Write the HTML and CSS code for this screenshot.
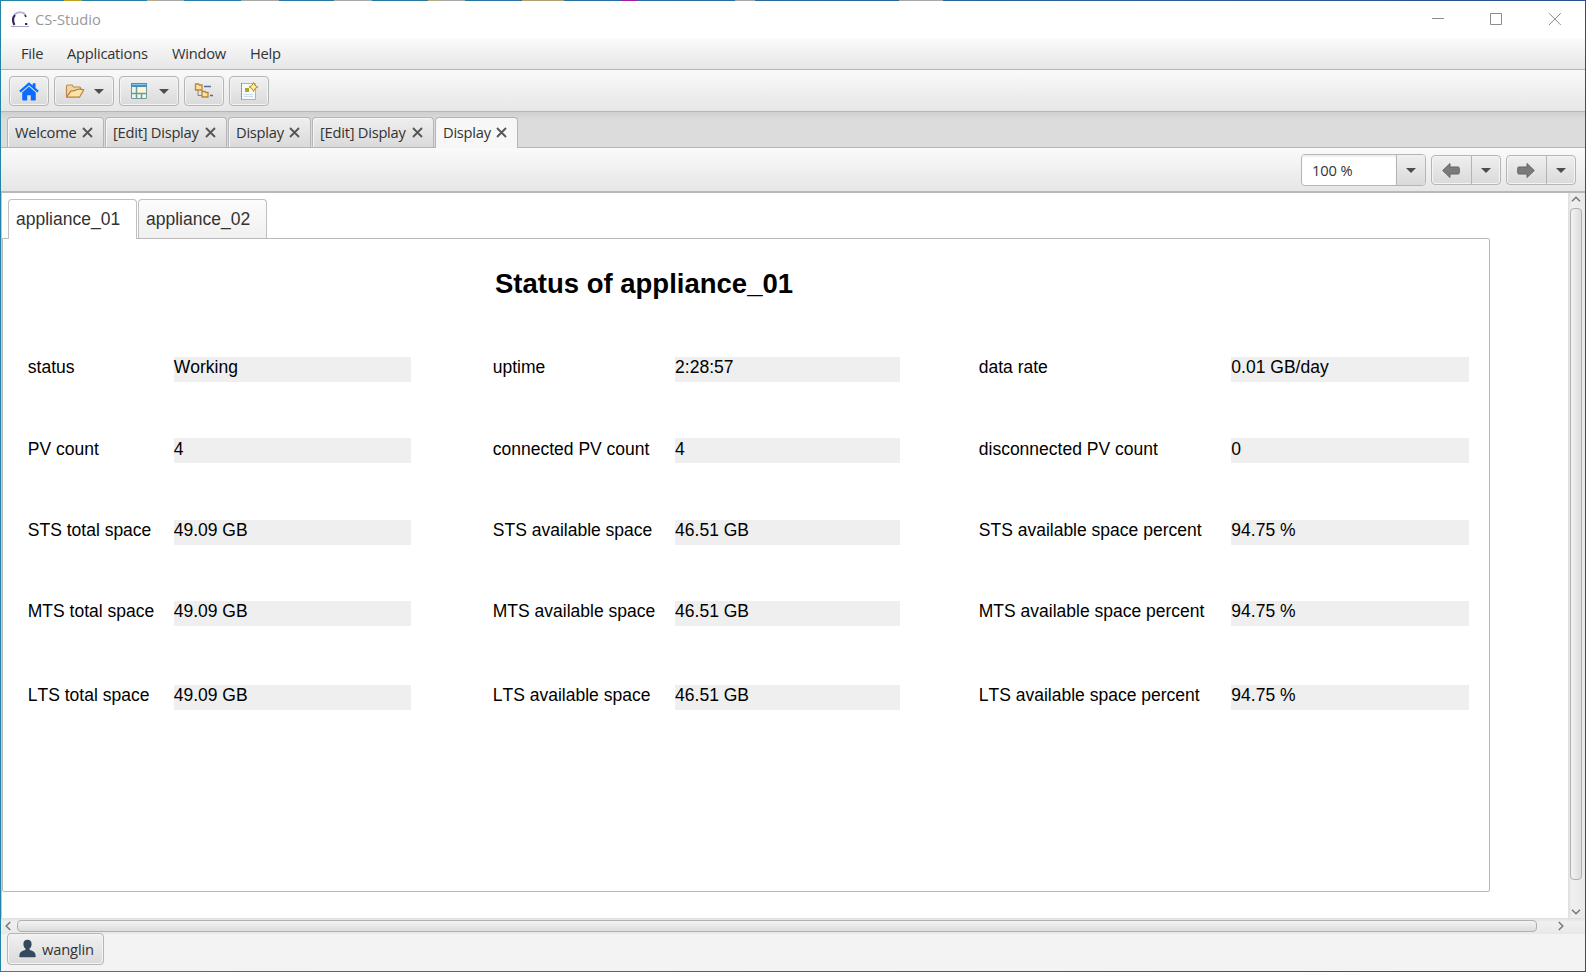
FILE: index.html
```html
<!DOCTYPE html>
<html lang="en">
<head>
<meta charset="utf-8">
<title>CS-Studio</title>
<link rel="stylesheet" href="styles.css">
</head>
<body>
<div class="window">
  <header class="titlebar">
    <svg class="logo" width="18" height="16" viewBox="0 0 18 16"><path d="M3.500 3.500C5.500 1.500 8 1 10 1.300C12.500 1.600 14.200 3 14.700 5.500" fill="none" stroke="#b9b4cf" stroke-width="2"/><path d="M3.300 14C1.500 10 2 6 4 4" fill="none" stroke="#33265c" stroke-width="2.200"/><path d="M14 4l1 2" stroke="#33265c" stroke-width="1.500"/><path d="M14 12h2.300v2H14z" fill="#33265c"/><path d="M0 15.500h18" stroke="#aaa6bd"/></svg>
    <span class="title">CS-Studio</span>
    <svg class="winctl" width="130" height="14" viewBox="0 0 130 14" fill="none" stroke="#8c8c8c"><path d="M0 5.500h12M58.500 .5h11v11h-11zM117 .2l11.800 11.800M128.800 .2L117 12"/></svg>
  </header>
  <nav class="menubar"><span class="m1">File</span><span class="m2">Applications</span><span class="m3">Window</span><span class="m4">Help</span></nav>
  <div class="toolbar">
    <button class="btn"><svg width="20" height="19" viewBox="0 0 20 19" fill="#0a6cff"><path d="M10 .3L.2 8.800l1.400 1.600L10 3.200l8.400 7.200 1.400-1.600-3.300-2.900V1.300h-2.800v2.200z"/><path d="M10 4.600l-6.800 5.800v7.100q0 1 1 1h4v-5.300h3.600v5.300h4q1 0 1-1v-7.100z"/></svg></button>
    <button class="btn wide"><svg width="20" height="16" viewBox="0 0 20 16"><path d="M1.500 13.500V3.500q0-1.500 1.500-1.500h4l1.500 2h6q1 0 1 1v3" fill="#f3d5a3" stroke="#c08a4a" stroke-width="1.200"/><path d="M1.500 14.200L6 7.800q3 .6 6-1.300q3-.8 6.800.3l-4.300 7.400z" fill="#fbe3a5" stroke="#b97f3f" stroke-width="1.200" stroke-linejoin="round"/></svg><i class="arrow"></i></button>
    <button class="btn wide"><svg class="layout" width="16" height="16" viewBox="0 0 16 16"><path d="M.5.500h15v15H.5z" fill="#eef6e8" stroke="#6f97a0"/><path d="M0 0h16v4H0z" fill="#4590c4"/><path d="M1 1h14v1H1z" fill="#8ec4e8"/><path d="M6 5h9v5H6z" fill="#fff7cf"/><path d="M5.500 4v12M1 10.500h14.500M10.500 10.500v5" stroke="#6f97a0" stroke-width="1.500" fill="none"/></svg><i class="arrow"></i></button>
    <button class="btn"><svg width="20" height="16" viewBox="0 0 20 16"><path d="M4 7v5.500h4M10 3.500h6" fill="none" stroke="#7b8594"/><path d="M1.500 1h3l1 1H8v5H1.500zM8 8.500h3l1 1h2v4.500H8z" fill="#ffe39a" stroke="#b9853b" stroke-width="1.300"/><path d="M10 3.500h7M16 12.500h3" stroke="#4d6eac" stroke-width="1.500"/></svg></button>
    <button class="btn"><svg width="18" height="19" viewBox="0 0 18 19"><path d="M1.500 1.500h14v16h-14z" fill="#f4faf9" stroke="#a9b8a8"/><path d="M1.500 1v17" stroke="#6f9184" stroke-dasharray="1.500 1"/><path d="M5 6h4v4H5z" fill="#b5a51e"/><path d="M4 12.500h9M4 14.500h9" stroke="#cbdcec"/><path d="M13.500 .6l1.500 2.900 2.900 1.500-2.900 1.500-1.500 2.900L12 6.500 9.100 5 12 3.500z" fill="#fff3a0" stroke="#b58b24"/></svg></button>
  </div>
  <div class="tabs">
    <div class="tab t1"><span>Welcome</span><svg class="x" viewBox="0 0 11 11"><path d="M1 1l9 9M10 1l-9 9"/></svg></div>
    <div class="tab t2"><span>[Edit] Display</span><svg class="x" viewBox="0 0 11 11"><path d="M1 1l9 9M10 1l-9 9"/></svg></div>
    <div class="tab t3"><span>Display</span><svg class="x" viewBox="0 0 11 11"><path d="M1 1l9 9M10 1l-9 9"/></svg></div>
    <div class="tab t2"><span>[Edit] Display</span><svg class="x" viewBox="0 0 11 11"><path d="M1 1l9 9M10 1l-9 9"/></svg></div>
    <div class="tab t3 active"><span>Display</span><svg class="x" viewBox="0 0 11 11"><path d="M1 1l9 9M10 1l-9 9"/></svg></div>
  </div>
  <div class="viewbar">
    <div class="combo"><span class="zoom">100 %</span><span class="drop"><i class="arrow"></i></span></div>
    <div class="split"><span class="nav"><svg width="18" height="15" viewBox="0 0 18 15"><path d="M.7 7.500L8 .5v3.500h8q1.300 0 1.300 1.300v4.400q0 1.300-1.300 1.300H8v3.500z" fill="#7b7b7b" stroke="#646464" stroke-linejoin="round"/></svg></span><span class="drop2"><i class="arrow"></i></span></div>
    <div class="split"><span class="nav"><svg width="18" height="15" viewBox="0 0 18 15"><path d="M17.300 7.500L10 .5v3.500H2Q.7 4 .7 5.300v4.400q0 1.300 1.300 1.300h8v3.500z" fill="#7b7b7b" stroke="#646464" stroke-linejoin="round"/></svg></span><span class="drop2"><i class="arrow"></i></span></div>
  </div>
  <div class="viewport">
    <main class="canvas">
      <div class="apptabs"><div class="apptab on">appliance_01</div><div class="apptab">appliance_02</div></div>
      <section class="panel">
        <h1>Status of appliance_01</h1>
        <div class="grid">
          <span>status</span><b>Working</b><i></i><span>uptime</span><b>2:28:57</b><i></i><span>data rate</span><b>0.01 GB/day</b>
          <span class="low">PV count</span><b class="low">4</b><i></i><span class="low">connected PV count</span><b class="low">4</b><i></i><span class="low">disconnected PV count</span><b class="low">0</b>
          <span>STS total space</span><b>49.09 GB</b><i></i><span>STS available space</span><b>46.51 GB</b><i></i><span>STS available space percent</span><b>94.75 %</b>
          <span>MTS total space</span><b>49.09 GB</b><i></i><span>MTS available space</span><b>46.51 GB</b><i></i><span>MTS available space percent</span><b>94.75 %</b>
          <span>LTS total space</span><b>49.09 GB</b><i></i><span>LTS available space</span><b>46.51 GB</b><i></i><span>LTS available space percent</span><b>94.75 %</b>
        </div>
      </section>
    </main>
    <div class="vscroll"><svg class="chev" width="10" height="6" viewBox="0 0 10 6"><path d="M1 5.200L5 1.200l4 4"/></svg><div class="vthumb"></div><svg class="chev" width="10" height="6" viewBox="0 0 10 6"><path d="M1 .8l4 4 4-4"/></svg></div>
  </div>
  <div class="hscroll"><svg class="chev" width="6" height="10" viewBox="0 0 6 10"><path d="M5.200 1L1.200 5l4 4"/></svg><div class="hthumb"></div><svg class="chev" width="6" height="10" viewBox="0 0 6 10"><path d="M.8 1l4 4-4 4"/></svg></div>
  <footer class="status"><button class="user"><svg width="17" height="19" viewBox="0 0 17 19" fill="#34495e"><path d="M8.500 .8c2.800 0 4.300 2 4.100 4.600-.1 2-1.100 3.300-2 4.200v1.300c2.500.8 5.200 1.400 5.800 4.300l.3 2.300q0 .8-.8.800H1.100q-.8 0-.8-.8l.3-2.300c.6-2.900 3.300-3.500 5.800-4.300V9.600c-.9-.9-1.900-2.200-2-4.200C4.200 2.800 5.700.8 8.500.8z"/></svg><span>wanglin</span></button></footer>
</div>
</body>
</html>
```
FILE: styles.css
```css
* { box-sizing: border-box; }
body {
  margin: 0; padding: 1px; width: 1586px; height: 972px; overflow: hidden;
  background:
    linear-gradient(90deg, transparent 64px, #c0a020 64px 82px, transparent 82px 147px, #b5ab85 147px 158px, #a8a8a8 158px 184px, transparent 184px 241px, #a8a8a8 241px 279px, transparent 279px 334px, #a8a8a8 334px 372px, transparent 372px 428px, #b5ab85 428px 439px, #a8a8a8 439px 465px, transparent 465px 522px, #b0a070 522px 564px, transparent 564px 621px, #a01da0 621px 637px, transparent 637px 735px, #a8a8a8 735px 755px, transparent 755px 899px, #a8a8a8 899px 943px, transparent 943px) 0 0 / 100% 1px no-repeat,
    linear-gradient(90deg, #2583aa, #2a6a9c 50%, #2b4f8e);
  font: 14.7px/20px "Open Sans", "Noto Sans", sans-serif; letter-spacing: -0.25px; color: #333;
}
.window { display: flex; flex-direction: column; width: 1584px; height: 970px; background: #f3f3f3; }
.titlebar { display: flex; align-items: flex-start; height: 37px; background: #fff; padding: 10px 18px 0 10px; color: #999; }
.logo { margin-right: 6px; }
.title { margin-top: -2px; letter-spacing: 0; }
.winctl { margin: 2px 5px 0 auto; }
.menubar { display: flex; height: 32px; padding: 5px 0 0 20px; background: linear-gradient(#fbfbfb, #e6e6e6); border-bottom: 1px solid #b5b5b5; }
.m1 { width: 46px; } .m2 { width: 105px; } .m3 { width: 78px; }
.toolbar { display: flex; gap: 5px; height: 42px; padding: 6px 8px 0; background: linear-gradient(#fafafa, #e6e6e6); border-bottom: 1px solid #b5b5b5; }
.btn, .user { font: inherit; letter-spacing: inherit; color: inherit; border: 1px solid #b5b5b5; border-radius: 4px; padding: 0; background: linear-gradient(#f1f1f1, #dadada); box-shadow: inset 0 0 0 1px #f4f4f4; }
.btn { width: 40px; height: 30px; display: flex; align-items: center; justify-content: center; }
.wide { width: 60px; justify-content: space-between; padding: 0 9px 0 10px; }
.layout { margin-left: 1px; }
.arrow { display: block; width: 0; height: 0; border: 5px solid transparent; border-top-color: #4d4d4d; border-bottom: 0; }
.tabs { display: flex; align-items: flex-end; gap: 1px; height: 36px; padding-left: 6px; background: linear-gradient(#cfcfcf, #dcdcdc 8px); border-bottom: 1px solid #b5b5b5; }
.tab { display: flex; height: 30px; align-items: flex-start; justify-content: space-between; border: 1px solid #b5b5b5; border-bottom: 0; border-radius: 4px 4px 0 0; background: linear-gradient(#efefef, #dadada); box-shadow: inset 1px 1px 0 #f6f6f6; padding: 4px 10.5px 0 7px; white-space: nowrap; }
.t1 { width: 97px; } .t2 { width: 122px; } .t3 { width: 83px; }
.tab.active { height: 31px; margin-bottom: -1px; background: #f7f7f7; }
.x { width: 11px; height: 11px; margin-top: 5px; stroke: #555; stroke-width: 1.8; fill: none; flex: none; }
.viewbar { display: flex; justify-content: flex-end; align-items: center; gap: 5px; height: 45px; padding: 1px 9px 0 0; background: linear-gradient(#fafafa, #e6e6e6); border-bottom: 2px solid #b9b9b9; }
.combo { display: flex; width: 125px; height: 32px; border: 1px solid #b5b5b5; border-radius: 4px; background: #fff; overflow: hidden; }
.zoom { width: 94px; padding: 5px 0 0 10px; letter-spacing: -0.1px; box-shadow: inset 0 2px 2px #eee; }
.drop, .drop2, .nav { display: flex; align-items: center; justify-content: center; }
.drop { width: 29px; border-left: 1px solid #b5b5b5; background: linear-gradient(#efefef, #dadada); }
.split { display: flex; width: 70px; height: 30px; border: 1px solid #b5b5b5; border-radius: 4px; background: linear-gradient(#efefef, #dadada); box-shadow: inset 0 0 0 1px #f4f4f4; }
.nav { width: 39px; padding-right: 2px; }
.drop2 { width: 29px; border-left: 1px solid #b5b5b5; }
.viewport { display: flex; height: 725px; background: #fff; border-left: 1px solid #c8c8c8; }
.canvas { width: 1566px; padding: 6px 0 0; font-family: "Liberation Sans", Arial, sans-serif; font-size: 17.5px; letter-spacing: 0; font-kerning: none; }
.apptabs { display: flex; gap: 1px; padding-left: 6px; height: 39px; }
.apptab { width: 129px; height: 39px; border: 1px solid #c0c0c0; border-bottom: 0; border-radius: 4px 4px 0 0; padding: 9px 0 0 7px; background: linear-gradient(#fcfcfc, #f0f0f0); }
.apptab.on { height: 40px; background: #fff; z-index: 1; }
.panel { width: 1488px; height: 654px; border: 1px solid #b8b8b8; border-radius: 0 2px 2px; color: #000; }
h1 { margin: 0; padding: 29px 0 0 492px; font-size: 27.5px; line-height: 32px; }
.grid { display: grid; grid-template-columns: 145.9px 237.1px 82px 182.3px 224.7px 79px 252.6px 237.4px; grid-template-rows: 81px 82px 81px 84px 25px; padding: 57px 0 0 24.8px; white-space: nowrap; }
.grid b { font-weight: 400; background: #efefef; height: 25px; }
.grid .low { padding-top: 1px; }
.vscroll { display: flex; flex-direction: column; align-items: center; justify-content: space-between; width: 17px; padding: 3px 1px 3px 0; background: linear-gradient(90deg, #dedede, #f0f0f0 4px, #e8e8e8); }
.vthumb { width: 12px; height: 672px; margin: 6px 0 auto; border: 1px solid #b0b0b0; border-radius: 4px; background: linear-gradient(90deg, #f3f3f3, #dcdcdc); }
.hscroll { display: flex; align-items: center; height: 16px; padding: 0 21px 0 4px; background: linear-gradient(#dedede, #f0f0f0 4px, #e8e8e8); }
.hthumb { width: 1520px; height: 12px; margin: 0 auto 0 6px; border: 1px solid #b0b0b0; border-radius: 4px; background: linear-gradient(#f3f3f3, #dcdcdc); }
.chev { fill: none; stroke: #777; stroke-width: 1.5; flex: none; }
.status { height: 37px; padding-left: 6px; }
.user { display: flex; align-items: center; width: 97px; height: 32px; margin-top: -1px; padding: 0 0 1px 11px; gap: 6px; letter-spacing: -0.15px; }
```
